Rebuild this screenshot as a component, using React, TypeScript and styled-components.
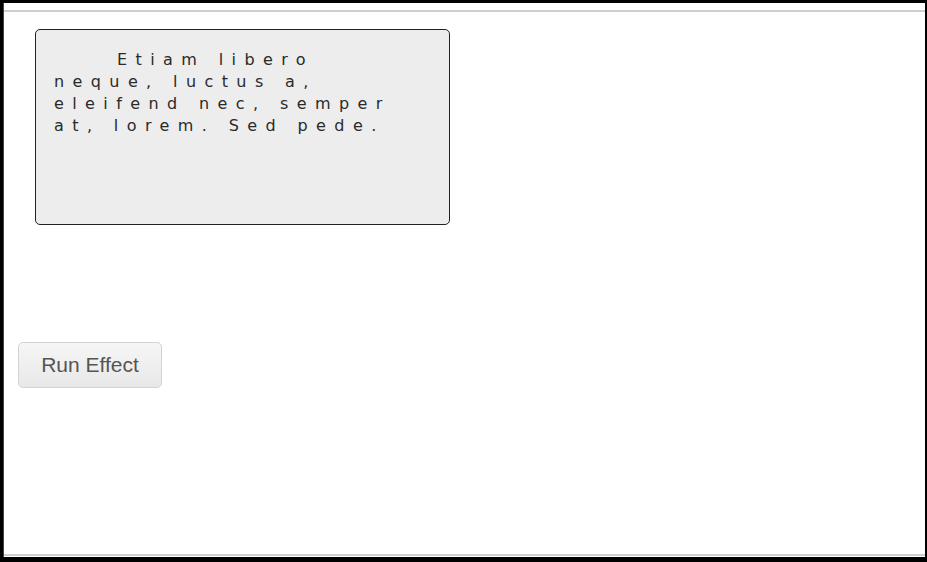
import styled, { createGlobalStyle } from 'styled-components';

const GlobalStyle = createGlobalStyle`
    html, body {
        margin: 0;
        padding: 0;
        background: #000;
    }
`;

export default function App() {
    return (
        <>
            <GlobalStyle />
            <Frame>
                <Page>
                    <Rule />
                    <Content>
                        <EffectBox>
                            <EffectText>
                                Etiam libero neque, luctus a, eleifend nec, semper at, lorem. Sed pede.
                            </EffectText>
                        </EffectBox>
                        <RunButton type="button">Run Effect</RunButton>
                    </Content>
                    <Rule />
                </Page>
            </Frame>
        </>
    );
}

const Frame = styled.div`
    box-sizing: border-box;
    width: 927px;
    height: 562px;
    padding: 3px 2px 5px 3px;
    background: #000;
`;

const Page = styled.div`
    display: flex;
    flex-direction: column;
    height: 100%;
    padding-top: 7px;
    padding-bottom: 1px;
    box-sizing: border-box;
    background: #fff;
    border-left: 1px solid #444;
`;

const Rule = styled.div`
    height: 2px;
    background: #cfcfcf;
    flex: none;
`;

const Content = styled.div`
    flex: 1;
    display: flex;
    flex-direction: column;
    align-items: flex-start;
    padding-top: 17px;
`;

const EffectBox = styled.div`
    box-sizing: border-box;
    width: 415px;
    height: 196px;
    margin-left: 31px;
    padding: 19px 42px 18px 18px;
    background: #ededed;
    border: 1px solid #222;
    border-radius: 5px;
`;

const EffectText = styled.p`
    margin: 0;
    font-family: 'DejaVu Sans', sans-serif;
    font-size: 16px;
    line-height: 22px;
    letter-spacing: 8.4px;
    text-indent: 63px;
    color: #2a2a2a;
`;

const RunButton = styled.button`
    margin-top: 117px;
    margin-left: 14px;
    width: 144px;
    height: 46px;
    padding: 0;
    font-family: 'Liberation Sans', Arial, sans-serif;
    font-size: 21px;
    color: #555;
    background: linear-gradient(180deg, #f6f6f6 0%, #efefef 50%, #e8e8e8 100%);
    border: 1px solid #d3d3d3;
    border-radius: 5px;
`;
